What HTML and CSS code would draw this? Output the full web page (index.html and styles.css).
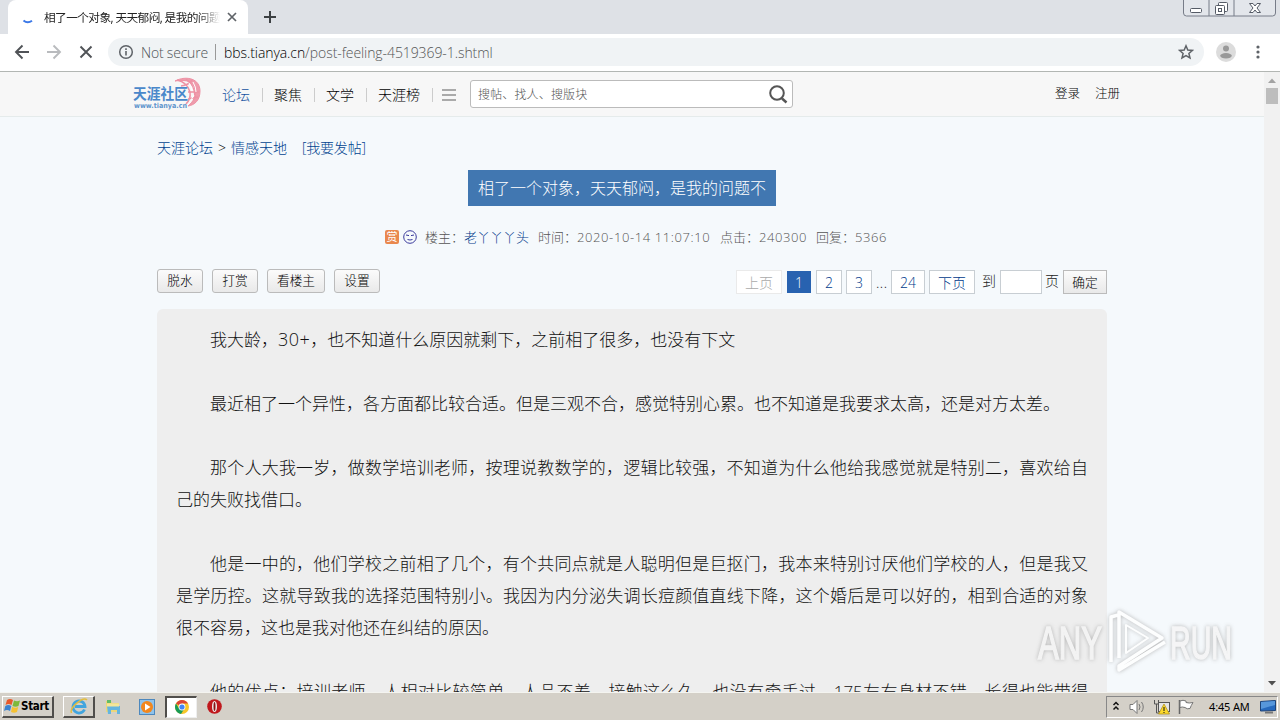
FILE: index.html
```html
<!DOCTYPE html>
<html lang="zh-CN">
  <head>
    <meta charset="UTF-8" />
    <title>相了一个对象，天天郁闷，是我的问题</title>
    <link rel="stylesheet" href="styles.css">
  </head>
  <body>
    <div class="tabstrip">
      <div class="tab">
        <svg class="spinner" width="12" height="14" viewBox="0 0 12 14"><path d="M1.500 10.500Q5.500 14 10 10.800" fill="none" stroke="#3b78e7" stroke-width="2"/></svg>
        <span class="tab-title">相了一个对象, 天天郁闷, 是我的问题</span>
        <svg class="tab-close" width="10" height="10" viewBox="0 0 10 10"><path d="M1 1l8 8M9 1l-8 8" stroke="#5f6368" stroke-width="1.700"/></svg>
      </div>
      <svg class="newtab" width="12" height="12" viewBox="0 0 12 12"><path d="M6 0v12M0 6h12" stroke="#3c4043" stroke-width="2"/></svg>
      <svg class="winbtns" width="94" height="17" viewBox="0 0 94 17">
        <path d="M.5 0v13q0 3 3 3h86q3 0 3-3V0M26 0v16M51 0v16" fill="#e3e6eb" stroke="#777c88"/>
        <g fill="#fff" stroke="#555b66">
          <rect x="7.500" y="8.500" width="11" height="4" rx="1"/>
          <rect x="35.500" y="2.500" width="9" height="9" rx="1"/>
          <rect x="32.500" y="5.500" width="9" height="9" rx="1"/>
          <rect x="35.500" y="8.500" width="3" height="3"/>
          <path d="M66.500 3.500h3.500l2 2.500 2-2.500h3.500L74 8l3.500 4.500H74L72 10l-2 2.500h-3.500L70 8z"/>
        </g>
      </svg>
    </div>
    <div class="toolbar">
      <svg width="108" height="36" viewBox="0 0 108 36" fill="none" stroke-width="1.900">
        <path d="M29 18H16M22.500 11.500L16 18l6.500 6.500" stroke="#505357"/>
        <path d="M47 18h13M53.500 11.500L60 18l-6.500 6.500" stroke="#b9bbbe"/>
        <path d="M80.500 12.500l11 11M91.500 12.500l-11 11" stroke="#505357"/>
      </svg>
      <div class="omnibox">
        <svg width="16" height="16" viewBox="0 0 16 16"><circle cx="8" cy="8" r="6.300" fill="none" stroke="#5f6368" stroke-width="1.500"/><path d="M8 7v4.500M8 4.300v1.700" stroke="#5f6368" stroke-width="1.600"/></svg>
        <span class="secure">Not secure</span>
        <i class="urlsep"></i>
        <span class="url"><b>bbs.tianya.cn</b>/post-feeling-4519369-1.shtml</span>
        <svg class="star" width="16" height="16" viewBox="0 0 16 16"><path d="M8 1.800l1.800 4.200 4.600.4-3.500 3 1.100 4.500L8 11.500l-4 2.400 1.100-4.500-3.500-3 4.600-.4z" fill="none" stroke="#5f6368" stroke-width="1.500"/></svg>
      </div>
      <svg class="avatar" width="20" height="20" viewBox="0 0 20 20"><circle cx="10" cy="10" r="10" fill="#dcdcdc"/><circle cx="10" cy="6.500" r="3" fill="#999"/><ellipse cx="10" cy="13.800" rx="5.800" ry="2.700" fill="#999"/></svg>
      <svg class="more" width="4" height="14" viewBox="0 0 4 14" fill="#5f6368"><circle cx="2" cy="2" r="1.600"/><circle cx="2" cy="7" r="1.600"/><circle cx="2" cy="12" r="1.600"/></svg>
    </div>

    <div class="viewport">
      <div class="page">
        <div class="topnav">
          <svg class="logo" width="70" height="34" viewBox="0 0 70 34">
            <g fill="none" stroke="#ee91a4">
              <path d="M42 5C54-1 67 3 67 15c0 9-5 14-12 15 6-5 8-10 7-16C61 6 54 3 42 5z" fill="#ee9cac"/>
              <path d="M44 4q10 2 13 12q1 7-4 12M48 10q8-1 11-6M55 16h11M55 23q6-1 10-2M53 3q9 6 9 18" stroke-width="1.500"/>
              <path d="M60 6q3 5 3 10M56 7q3 4 3 8M61 19l-3 5" stroke="#fff"/>
            </g>
            <text x="0" y="23" class="logo-cn" textLength="55" lengthAdjust="spacingAndGlyphs">天涯社区</text>
            <text x="1" y="32" class="logo-en" textLength="53" lengthAdjust="spacingAndGlyphs">www.tianya.cn</text>
          </svg>
          <div class="nav">
            <a class="on">论坛</a><a>聚焦</a><a>文学</a><a>天涯榜</a>
          </div>
          <svg class="burger" width="14" height="12" viewBox="0 0 14 12"><path d="M0 1h14M0 6h14M0 11h14" stroke="#aaa" stroke-width="2"/></svg>
          <div class="search">
            <span>搜帖、找人、搜版块</span>
            <svg width="20" height="20" viewBox="0 0 20 20" fill="none" stroke="#555"><circle cx="8" cy="9" r="6.800" stroke-width="2"/><path d="M13 14.500l4.500 4" stroke-width="2.500"/></svg>
          </div>
          <div class="login"><a>登录</a><a>注册</a></div>
        </div>

        <div class="main">
          <div class="crumbs"><a>天涯论坛</a><span>&gt;</span><a>情感天地</a><a class="post">[我要发帖]</a></div>
          <h1>相了一个对象，天天郁闷，是我的问题不</h1>
          <div class="meta">
            <span class="shang">赏</span>
            <svg width="14" height="14" viewBox="0 0 14 14" fill="none" stroke="#3a3a9c"><circle cx="7" cy="7" r="6.300"/><path d="M3 5l3 .6M8 5.600l3-.6M4.500 9.500q2.500 1 5 0"/></svg>
            <span class="author">楼主：<a>老丫丫丫头</a></span>
            <span class="time">时间：<em>2020-10-14 11:07:10</em></span>
            <span class="click">点击：<em>240300</em></span>
            <span>回复：<em>5366</em></span>
          </div>
          <div class="actions">
            <div class="btns"><button>脱水</button><button>打赏</button><button class="wide">看楼主</button><button>设置</button></div>
            <div class="pager">
              <a class="w46 off">上页</a><a class="cur">1</a><a>2</a><a>3</a><span class="dots">...</span><a class="w34">24</a><a class="w46">下页</a>
              <span class="to">到</span><input type="text"><span class="ye">页</span><button>确定</button>
            </div>
          </div>
          <div class="content">
            <p>我大龄，<span class="num">30+</span>，也不知道什么原因就剩下，之前相了很多，也没有下文</p>
            <p>最近相了一个异性，各方面都比较合适。但是三观不合，感觉特别心累。也不知道是我要求太高，还是对方太差。</p>
            <p>那个人大我一岁，做数学培训老师，按理说教数学的，逻辑比较强，不知道为什么他给我感觉就是特别二，喜欢给自己的失败找借口。</p>
            <p>他是一中的，他们学校之前相了几个，有个共同点就是人聪明但是巨抠门，我本来特别讨厌他们学校的人，但是我又是学历控。这就导致我的选择范围特别小。我因为内分泌失调长痘颜值直线下降，这个婚后是可以好的，相到合适的对象很不容易，这也是我对他还在纠结的原因。</p>
            <p>他的优点：培训老师，人相对比较简单，人品不差，接触这么久，也没有牵手过，175左右身材不错，长得也能带得出去。</p>
          </div>
        </div>
      </div>
      <div class="scrollbar">
        <svg width="16" height="14" viewBox="0 0 16 14"><path d="M4 11l4-4.500 4 4.500z" fill="#a3a3a3"/></svg>
        <div class="thumb"></div>
        <svg class="down" width="16" height="16" viewBox="0 0 16 16"><path d="M4 5l4 4.500L12 5z" fill="#505050"/></svg>
      </div>
    </div>

    <div class="taskbar">
      <div class="start">
        <svg width="17" height="16" viewBox="0 0 17 16"><path d="M3 2q3-2 6 0L7.500 7q-3-2-6 0z" fill="#e8592b"/><path d="M10 2.500q3 1.500 6 0L14.500 8q-3 1.500-6 0z" fill="#7db93b"/><path d="M1.300 8q3-2 6 0L6 13q-3-2-6 0z" fill="#3b83d0"/><path d="M8.200 8.800q3 1.700 6 .2L13 14q-3 1.500-6 0z" fill="#f5c132"/></svg>
        Start
      </div>
      <div class="task raised">
        <svg width="18" height="18" viewBox="0 0 18 18" fill="none"><path d="M14.500 12.500A6 6 0 1 1 15 9.500H5" stroke="#42a5de" stroke-width="2.800"/><path d="M1.500 16C-1 11 13-1 17 3" stroke="#e3bd3e" stroke-width="1.500"/></svg>
      </div>
      <svg class="folder" width="16" height="16" viewBox="0 0 16 16"><path d="M1 2h5l1 2h7v9H1z" fill="#ecd779"/><path d="M2 1h4v3H2z" fill="#63bc68"/><path d="M2 7h13v8h-3v-4H6v4H3z" fill="#65b5df"/><path d="M2 4.500h12v3H2z" fill="#f5e69a"/></svg>
      <svg class="media" width="16" height="16" viewBox="0 0 16 16"><rect x=".5" y=".5" width="15" height="15" fill="#8fc3eb" stroke="#4d88bd"/><circle cx="8" cy="8" r="6" fill="#f2871d"/><path d="M6 4.500v7L11.500 8z" fill="#fff"/></svg>
      <div class="task pressed">
        <svg width="14" height="14" viewBox="0 0 14 14"><circle cx="7" cy="7" r="7" fill="#f6c629"/><path d="M7 7L1 3.500A7 7 0 0 1 13 3.500H7z" fill="#db4437"/><path d="M1 3.500A7 7 0 0 0 6 14l3.500-5.500L4 8.500z" fill="#189b57"/><circle cx="7" cy="7" r="3.400" fill="#fff"/><circle cx="7" cy="7" r="2.600" fill="#4285f4"/></svg>
      </div>
      <svg class="opera" width="15" height="15" viewBox="0 0 15 15"><circle cx="7.500" cy="7.500" r="7.300" fill="#c0181d"/><ellipse cx="7.500" cy="7.500" rx="2.500" ry="5.500" fill="#eee"/><ellipse cx="7.500" cy="7.500" rx="1" ry="4.500" fill="#8a1114"/></svg>
      <div class="tray">
        <svg width="98" height="20" viewBox="0 0 98 20" fill="none">
          <path d="M6.500 8L9 5.500 11.500 8M6.500 12.500L9 10l2.500 2.500" stroke="#111" stroke-width="1.500"/>
          <path d="M23 7.500h3l4-4v13l-4-4h-3z" fill="#fff" stroke="#777"/><path d="M32 7q2 3 0 6M34.500 5q3.500 5 0 10" stroke="#777"/>
          <rect x="51.500" y="5.500" width="11" height="9" fill="#e4e4e4" stroke="#555"/><path d="M47.500 3v4h4V3M49.500 7v9h4" stroke="#555"/><path d="M57 7l5.500 10h-11z" fill="#fcd92c" stroke="#a98a11" stroke-width=".7"/><path d="M57 10v4M57 15v1" stroke="#111"/>
          <path d="M72.500 3v14" stroke="#666" stroke-width="1.500"/><path d="M73 4q3-1.500 6 0v1.500q3 1 7 0-2 3-3 6-3 1-5-1-3-1-5 0z" fill="#fff" stroke="#777"/>
        </svg>
        <span>4:45 AM</span>
        <svg class="desk" width="16" height="14" viewBox="0 0 16 14"><path d="M.5 1.500l15-1v10l-15 .5z" fill="#2669bd" stroke="#1d4379"/><path d="M1 2l14-1v4L1 9z" fill="#5797db"/><path d="M5 12.500h8" stroke="#777" stroke-width="2"/></svg>
      </div>
    </div>

    <svg class="watermark" width="200" height="66" viewBox="0 0 200 66">
      <text x="2" y="51" textLength="64" lengthAdjust="spacingAndGlyphs">ANY</text>
      <g fill="none" stroke="#fff" stroke-width="3.500" stroke-linejoin="round"><path d="M75 54V9l7-2M83 50V4l43 26-43 28v4l46-28" /><path d="M90 17v28l22-15z" stroke-width="2"/></g>
      <text x="134" y="51" textLength="62" lengthAdjust="spacingAndGlyphs">RUN</text>
    </svg>
  </body>
</html>
```

FILE: styles.css
```css
* {
  box-sizing: border-box;
}
body {
  margin: 0;
  width: 1280px;
  height: 720px;
  overflow: hidden;
  display: flex;
  flex-direction: column;
  position: relative;
  font-family: "Open Sans", "Noto Sans CJK SC", sans-serif;
  font-weight: 300;
  font-size: 13px;
  color: #222;
  text-spacing-trim: space-all;
}
svg {
  display: block;
  flex: none;
}
span, a {
  white-space: nowrap;
}

/* browser frame */
.tabstrip {
  height: 34px;
  flex: none;
  display: flex;
  background: #dee1e6;
}
.tab {
  width: 240px;
  margin-left: 8px;
  display: flex;
  align-items: center;
  background: #fff;
  border-radius: 8px 8px 0 0;
}
.spinner {
  margin-left: 14px;
}
.tab-title {
  width: 176px;
  margin: -2px 0 0 10px;
  overflow: hidden;
  font-size: 11.700px;
  font-weight: 400;
  letter-spacing: -0.600px;
  -webkit-mask-image: linear-gradient(90deg, #000 155px, transparent);
}
.tab-close {
  margin-left: 7px;
}
.newtab {
  margin: 11px 0 0 16px;
}
.winbtns {
  margin-left: auto;
  margin-right: 3px;
}
.toolbar {
  height: 38px;
  flex: none;
  display: flex;
  align-items: center;
  padding-bottom: 1px;
  background: #fff;
  border-bottom: 1px solid #b2b6b3;
}
.omnibox {
  width: 1096px;
  height: 28px;
  padding: 0 10px;
  display: flex;
  align-items: center;
  border-radius: 14px;
  background: #f0f3f5;
  font-size: 14px;
}
.secure {
  width: 67px;
  margin-left: 7px;
  letter-spacing: -0.200px;
  color: #4f5358;
}
.urlsep {
  width: 1px;
  height: 16px;
  margin: 0 8px 0 7px;
  background: #999;
}
.url {
  letter-spacing: -0.080px;
  color: #555;
}
.url b {
  font-weight: 300;
  color: #000;
}
.star {
  margin-left: auto;
}
.avatar {
  margin-left: 12px;
}
.more {
  margin-left: 20px;
}

/* page */
.viewport {
  height: 620px;
  flex: none;
  display: flex;
  overflow: hidden;
}
.page {
  width: 1264px;
  height: 620px;
  overflow: hidden;
  background: #f5f9fc;
}
.topnav {
  height: 45px;
  display: flex;
  align-items: center;
  background: #f7f7f7;
  border-bottom: 1px solid #e5ebeb;
}
.logo {
  margin: 0 0 2px 133px;
}
.logo-cn {
  font: 700 15px "Noto Sans CJK SC", sans-serif;
  fill: #4a88ca;
}
.logo-en {
  font: 700 7px "DejaVu Sans", sans-serif;
  fill: #5e94cc;
}
.nav {
  display: flex;
  margin: 1px 0 0 7px;
  font-size: 14px;
  color: #000;
}
.nav a {
  line-height: 14px;
  padding: 0 12px;
  border-right: 1px solid #ccc;
  margin-right: -1px;
}
.nav a.on {
  color: #1552a0;
}
.burger {
  margin: 2px 0 0 10px;
}
.search {
  width: 323px;
  height: 28px;
  margin-left: 14px;
  padding: 0 3px 0 7px;
  display: flex;
  align-items: center;
  justify-content: space-between;
  background: #fff;
  border: 1px solid #bbb;
  border-radius: 3px;
  font-size: 12px;
  color: #555;
}
.search span {
  letter-spacing: 0.150px;
}
.login {
  display: flex;
  gap: 15px;
  margin: -3px 0 0 262px;
  font-size: 12.500px;
  color: #000;
}
.main {
  width: 950px;
  margin-left: 157px;
}
.crumbs {
  height: 20px;
  margin-top: 20px;
  display: flex;
  align-items: center;
  font-size: 14px;
}
.crumbs a {
  color: #00438f;
}
.crumbs span {
  width: 18px;
  text-align: center;
  color: #000;
}
.crumbs .post {
  margin-left: 15px;
  letter-spacing: -0.200px;
}
h1 {
  width: 308px;
  height: 36px;
  margin: 13px 0 0 311px;
  line-height: 37px;
  text-align: center;
  white-space: nowrap;
  font-size: 16px;
  font-weight: 300;
  color: #fff;
  background: #4177b1;
}
.meta {
  height: 20px;
  margin: 20px 0 0 228px;
  display: flex;
  align-items: center;
  color: #555;
}
.meta svg {
  margin-top: 2px;
}
.meta em {
  font-style: normal;
  letter-spacing: 0.600px;
}
.meta a {
  color: #00398a;
}
.shang {
  width: 14px;
  height: 14px;
  margin: 2px 4px 0 0;
  border-radius: 2px;
  background: #e9884e;
  color: #fff;
  font-size: 11px;
  font-weight: 400;
  line-height: 13px;
  text-align: center;
}
.author {
  width: 106px;
  margin-left: 8px;
}
.author + .time {
  width: 182px;
  margin-left: 7px;
}
.click {
  width: 96px;
}
.actions {
  height: 26px;
  margin-top: 23px;
  display: flex;
  justify-content: space-between;
}
.btns {
  display: flex;
  gap: 9px;
}
button {
  width: 46px;
  height: 24px;
  padding: 0 0 2px;
  border: 1px solid #bbb;
  border-radius: 3px;
  background: linear-gradient(#fbfbfb, #e9e9e9);
  font: 300 12.700px/20px "Open Sans", "Noto Sans CJK SC", sans-serif;
  color: #000;
}
button.wide {
  width: 58px;
}
.pager {
  display: flex;
  align-items: center;
  font-size: 14px;
}
.pager a {
  width: 26px;
  height: 24px;
  margin-right: 4px;
  border: 1px solid #c8ced3;
  background: #fff;
  line-height: 23px;
  text-align: center;
  color: #003a8c;
}
.pager .w46 {
  width: 46px;
}
.pager .w34 {
  width: 34px;
}
.pager .off {
  border-color: #eaeaea;
  color: #aaa;
}
.pager .cur {
  width: 24px;
  height: 22px;
  margin: 0 5px 0 1px;
  border: 0;
  background: #2862b0;
  color: #fff;
}
.dots {
  width: 12px;
  margin-right: 3px;
  letter-spacing: 0.500px;
}
.to {
  margin: -4px 4px 0 3px;
}
.pager input {
  width: 42px;
  height: 24px;
  padding: 0;
  border: 1px solid #c8ced3;
  background: #fff;
}
.ye {
  width: 14px;
  margin: -4px 4px 0 3px;
}
.pager button {
  width: 44px;
  height: 24px;
  padding: 0;
  border-radius: 0;
}
.content {
  margin-top: 14px;
  padding: 15px 19px;
  border-radius: 6px 6px 0 0;
  background: #eee;
}
.content p {
  margin: 0 0 32px;
  font-size: 17px;
  line-height: 32px;
  text-indent: 34px;
  text-align: justify;
  color: #111;
}
.num {
  font-size: 18px;
  line-height: 1;
  letter-spacing: 0.500px;
}
.scrollbar {
  width: 16px;
  display: flex;
  flex-direction: column;
  align-items: center;
  background: #f1f1f1;
}
.thumb {
  width: 12px;
  height: 16px;
  margin-top: 2px;
  background: #bdbdbd;
}
.down {
  margin-top: auto;
}

/* taskbar */
.taskbar {
  height: 28px;
  display: flex;
  align-items: center;
  padding: 0 0 0 2px;
  background: #d4d0c8;
  border-top: 1px solid #f4f4f0;
}
.start {
  width: 52px;
  height: 22px;
  padding-left: 1px;
  display: flex;
  align-items: center;
  border: 1px solid #fff;
  border-right: 2px solid #504e4b;
  border-bottom: 2px solid #504e4b;
  font: 700 11.500px "DejaVu Sans Condensed", "DejaVu Sans", sans-serif;
  letter-spacing: -0.300px;
  color: #000;
}
.task {
  width: 32px;
  height: 22px;
  display: flex;
  align-items: center;
  justify-content: center;
}
.raised {
  margin-left: 9px;
  border: 1px solid #fff;
  border-right: 2px solid #504e4b;
  border-bottom: 2px solid #504e4b;
}
.pressed {
  margin-left: 10px;
  background: #fff;
  border: 1px solid #eee;
  border-top: 2px solid #504e4b;
  border-left: 2px solid #504e4b;
}
.folder {
  margin-left: 10px;
}
.media {
  margin-left: 18px;
}
.opera {
  margin-left: 10px;
}
.tray {
  width: 172px;
  height: 22px;
  margin: 0 2px 0 auto;
  display: flex;
  align-items: center;
  border: 1px solid #fff;
  border-top-color: #888;
  border-left-color: #888;
  font: 11px "Noto Sans", sans-serif;
  color: #000;
}
.tray span {
  width: 44px;
  margin-left: 4px;
  letter-spacing: -0.150px;
}
.desk {
  margin-left: 7px;
}

.watermark {
  position: absolute;
  left: 1036px;
  top: 608px;
  opacity: 0.850;
  filter: drop-shadow(0 0 2px #aaa);
}
.watermark text {
  font: 400 46px "Liberation Sans", sans-serif;
  fill: #f5f5f5;
  stroke: #f5f5f5;
  stroke-width: 1.500px;
}
```
